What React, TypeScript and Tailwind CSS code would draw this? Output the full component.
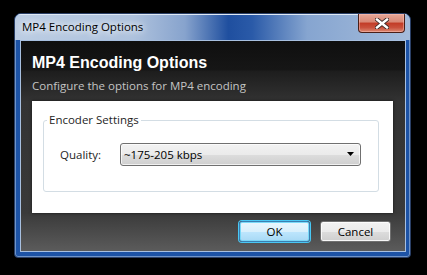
import React from "react";

const ui = { fontFamily: '"Open Sans", "Noto Sans", sans-serif' };

export default function App() {
  return (
    <div className="w-[427px] h-[275px] bg-black pl-[14px] pt-[13px] overflow-hidden" style={ui}>
      <div className="w-[397px] h-[245px] rounded-t-[7px] rounded-b-[4px] bg-[#1d53a6] border border-[#2a3f66] flex flex-col overflow-hidden shadow-[inset_0_0_0_1px_#6f94c8]">
        {/* title bar */}
        <div className="h-[26px] shrink-0 flex justify-between bg-[linear-gradient(90deg,#bccde3_0%,#aec2dd_30%,#87a3cd_43%,#1f4f9f_54%,#2a5aa8_60%,#86a5d0_74%,#a5bcdb_100%)] shadow-[inset_0_1px_0_#dfe9f5] pr-[5px]">
          <div className="pl-[7px] pt-[5px] text-[11.5px] leading-[16px] text-black [text-shadow:0_0_6px_#ffffff,0_0_10px_#ffffff]">
            MP4 Encoding Options
          </div>
          <div className="w-[47px] h-[19px] rounded-b-[4px] border border-t-0 border-[#4a1f18] bg-[linear-gradient(180deg,#e6a797_0%,#d98775_45%,#c23b26_50%,#c9503c_75%,#dc8a73_100%)] shadow-[inset_0_0_0_1px_rgba(255,200,190,0.45)] flex items-center justify-center">
            <svg width="14" height="11" viewBox="0 0 14 11">
              <path d="M2 1.5 L12 9.5 M12 1.5 L2 9.5" stroke="#3a2a28" strokeWidth="4.2" strokeLinecap="square" />
              <path d="M2 1.5 L12 9.5 M12 1.5 L2 9.5" stroke="#ffffff" strokeWidth="2.4" strokeLinecap="square" />
            </svg>
          </div>
        </div>
        {/* body */}
        <div className="flex-1 pl-[5px] pr-[4px] pb-[5px] flex">
          <div className="flex-1 flex flex-col border border-[#a8c0e0] bg-[linear-gradient(180deg,#0f0f0f_0px,#161616_29px,#1d1d1d_30px,#333333_61px,#3a3a3a_172px,#5c5c5c_211px)]">
            <div className="pl-[11px] pt-[11px] text-[16px] leading-[21px] font-bold text-white" style={{ fontFamily: '"Liberation Sans", Arial, sans-serif' }}>
              MP4 Encoding Options
            </div>
            <div className="pl-[11px] mt-[5px] text-[11.5px] leading-[16px] text-[#c4c4c4]">
              Configure the options for MP4 encoding
            </div>
            <div className="ml-[11px] mr-[12px] mt-[7px] bg-white pt-[19px] pl-[11px] pr-[14px] pb-[21px] shadow-[0_0_3px_rgba(0,0,0,0.6)]">
              <div className="relative h-[72px] border border-[#d3dde4] rounded-[3px] pt-[22px] pl-[16px] pr-[17px] flex items-center">
                <span className="absolute left-[3px] top-[-9px] bg-white px-[2px] text-[11.5px] leading-[16px] text-[#1e1e1e]">
                  Encoder Settings
                </span>
                <div className="self-start flex items-center w-full">
                  <span className="w-[60px] text-[11.5px] leading-[16px] text-[#1e1e1e]">Quality:</span>
                  <div className="flex-1 h-[23px] rounded-[3px] border border-[#707070] bg-[linear-gradient(180deg,#f2f2f2_0%,#ebebeb_50%,#dddddd_51%,#cfcfcf_100%)] shadow-[inset_0_0_0_1px_rgba(255,255,255,0.7)] flex items-center justify-between pl-[3px] pr-[5px]">
                    <span className="text-[11.5px] leading-[16px] text-black">~175-205 kbps</span>
                    <svg width="8" height="5" viewBox="0 0 8 5">
                      <path d="M0 0 H7 L3.5 4 Z" fill="#000" />
                    </svg>
                  </div>
                </div>
              </div>
            </div>
            <div className="flex-1 flex justify-end items-start gap-[10px] pt-[8px] pr-[14px]">
              <button className="w-[71px] h-[21px] rounded-[3px] border border-[#3c7fb1] bg-[linear-gradient(180deg,#eaf6fd_0%,#d9f0fc_50%,#bee6fd_51%,#a7d9f5_100%)] shadow-[0_0_0_1px_#48c8f5,inset_0_0_0_1px_#7ad9f8] text-[11.5px] leading-[16px] text-black">
                OK
              </button>
              <button className="w-[71px] h-[21px] rounded-[3px] border border-[#707070] bg-[linear-gradient(180deg,#f2f2f2_0%,#ebebeb_50%,#dddddd_51%,#cfcfcf_100%)] shadow-[inset_0_0_0_1px_rgba(255,255,255,0.8)] text-[11.5px] leading-[16px] text-black">
                Cancel
              </button>
            </div>
          </div>
        </div>
      </div>
    </div>
  );
}
